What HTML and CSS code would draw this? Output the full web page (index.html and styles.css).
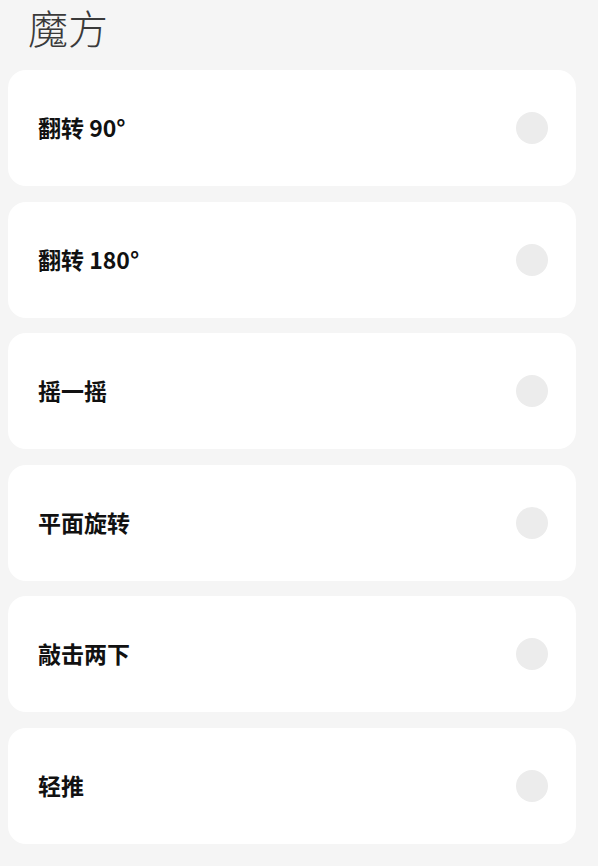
FILE: index.html
```html
<!DOCTYPE html>
<html lang="zh">
<head>
    <meta charset="UTF-8">
    <meta name="viewport" content="width=device-width, initial-scale=1.0">
    <title>魔方</title>
    <link rel="stylesheet" href="styles.css">
</head>
<body>

    <h1 class="page-title">魔方</h1>

    <div class="option-list">
        <div class="option-card">
            <span class="option-name">翻转 90°</span>
            <span class="option-radio"></span>
        </div>
        <div class="option-card">
            <span class="option-name">翻转 180°</span>
            <span class="option-radio"></span>
        </div>
        <div class="option-card">
            <span class="option-name">摇一摇</span>
            <span class="option-radio"></span>
        </div>
        <div class="option-card">
            <span class="option-name">平面旋转</span>
            <span class="option-radio"></span>
        </div>
        <div class="option-card">
            <span class="option-name">敲击两下</span>
            <span class="option-radio"></span>
        </div>
        <div class="option-card">
            <span class="option-name">轻推</span>
            <span class="option-radio"></span>
        </div>
    </div>

</body>
</html>
```

FILE: styles.css
```css
body {
    margin: 0;
    background-color: #f5f5f5;
    font-family: "Noto Sans CJK SC", "Noto Sans", sans-serif;
}
.page-title {
    margin: 0 0 19px 28px;
    padding-top: 3px;
    font-size: 40px;
    font-weight: 300;
    line-height: 48px;
    color: #3a3a3a;
}
.option-list {
    display: flex;
    flex-direction: column;
    gap: 15.6px;
    padding: 0 22px 0 8px;
}
.option-card {
    display: flex;
    align-items: center;
    justify-content: space-between;
    height: 116px;
    padding: 0 28px 0 30px;
    background: #fff;
    border-radius: 18px;
}
.option-name {
    font-size: 23px;
    font-weight: 700;
    line-height: 1.3;
    color: #111;
}
.option-radio {
    width: 32px;
    height: 32px;
    border-radius: 50%;
    background-color: #ececec;
}
```
